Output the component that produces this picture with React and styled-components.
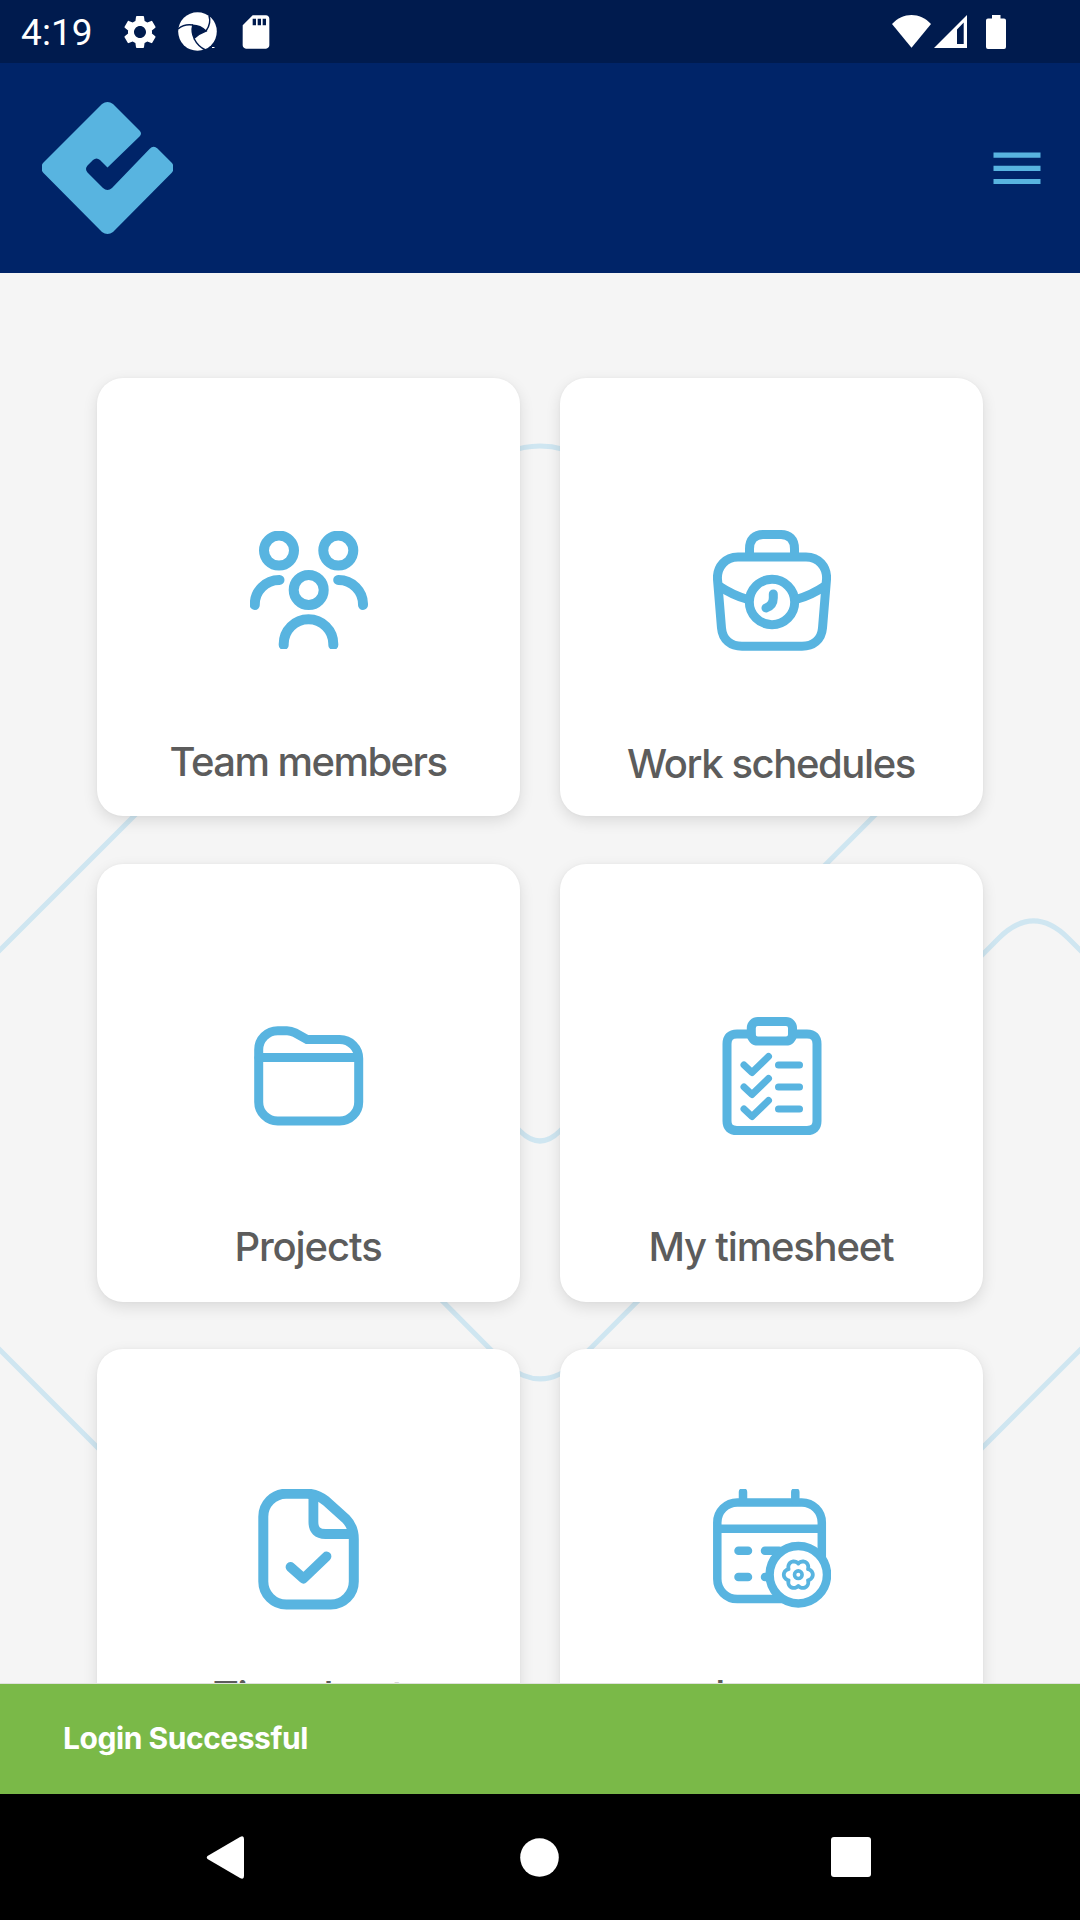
import React from 'react';
import styled, { createGlobalStyle } from 'styled-components';
import { MdSettings, MdSdCard } from 'react-icons/md';

const BLUE = '#58b4e0';
const NAVY = '#002468';
const STATUS = '#001b4e';

const GlobalStyle = createGlobalStyle`
  * { box-sizing: border-box; }
  body { margin: 0; background: #000; }
`;

const Screen = styled.div`
  width: 1080px;
  height: 1920px;
  display: flex;
  flex-direction: column;
  overflow: hidden;
  font-family: Inter, "Liberation Sans", sans-serif;
`;

const StatusBar = styled.div`
  height: 63px;
  flex: none;
  display: flex;
  align-items: center;
  justify-content: space-between;
  padding: 0 74px 0 21px;
  background: ${STATUS};
  color: #fff;
`;

const StatusGroup = styled.div`
  display: flex;
  align-items: center;
  svg { display: block; flex: none; }
`;

const Clock = styled.span`
  width: 99px;
  font: 400 37px/44px Roboto, sans-serif;
  letter-spacing: 0.1px;
  padding-top: 2px;
`;

const Spacer = styled.span`
  width: ${(p) => p.$w}px;
`;

const Header = styled.header`
  height: 210px;
  flex: none;
  display: flex;
  align-items: center;
  justify-content: space-between;
  padding: 0 39px 0 42px;
  background: ${NAVY};
  svg { display: block; }
`;

const MenuButton = styled.button`
  border: 0;
  padding: 0;
  background: none;
  color: ${BLUE};
`;

const Content = styled.main`
  flex: 1;
  min-height: 0;
  position: relative;
  overflow: hidden;
  background: #f5f5f5;
`;

const Backdrop = styled.svg`
  position: absolute;
  top: 0;
  left: 0;
`;

const CardGrid = styled.div`
  position: relative;
  display: grid;
  grid-template-columns: 423px 423px;
  grid-auto-rows: 438px;
  column-gap: 40px;
  row-gap: 47.6px;
  padding: 105px 97px 0;
`;

const Card = styled.div`
  display: flex;
  flex-direction: column;
  align-items: center;
  gap: ${(p) => p.$gap}px;
  padding-top: ${(p) => p.$top}px;
  border-radius: 26px;
  background: #fff;
  box-shadow: 0 5px 15px rgba(0, 0, 0, 0.11), 0 0 3px rgba(0, 0, 0, 0.04);
`;

const Glyph = styled.svg`
  flex: none;
  display: block;
  fill: none;
  stroke: ${BLUE};
  stroke-width: 9;
  stroke-linecap: round;
  stroke-linejoin: ${(p) => p.$join || 'round'};
`;

const Label = styled.span`
  padding-right: 1px;
  font-size: 40px;
  line-height: 50px;
  font-weight: 500;
  letter-spacing: ${(p) => p.$track}px;
  color: #5c5c5c;
  white-space: nowrap;
`;

const Toast = styled.div`
  height: 110px;
  flex: none;
  position: relative;
  display: flex;
  align-items: center;
  padding: 0 63px 2px;
  background: #7ab948;
  box-shadow: 0 -1px 0 #dfe2dc;
  color: #fff;
  font-size: 30px;
  font-weight: 700;
  letter-spacing: -0.45px;
`;

const NavBar = styled.nav`
  height: 126px;
  flex: none;
  display: flex;
  align-items: center;
  background: #000;
  padding: 0 209px 0 206px;
  justify-content: space-between;
  svg { display: block; }
`;

const HomeKey = styled.svg`
  margin-left: 3px;
`;

const Logo = () => (
  <svg width="131" height="132" viewBox="0 0 131 132" fill={BLUE}>
    <path d="M60 2Q65.5-2 71 2L97.5 28.500Q100.500 31.500 97.500 34.500L65.500 65.500L58 58Q54.500 55 51 58L45.500 63.500Q42.500 67 45.500 70.500L61 86Q65.500 90 70 86L107.500 47Q111.500 43 115.500 46.500L129.500 60.500Q134 65.500 129.500 71L71 130Q65.500 134 60 130L1.500 71Q-3 65.500 1.500 60.500Z" />
  </svg>
);

const Shutter = () => (
  <svg width="39" height="39" viewBox="0 0 39 39">
    <circle cx="19.500" cy="19.500" r="19.300" fill="#fff" />
    <g fill={STATUS} stroke={STATUS} strokeWidth="1.500">
      <path d="M14.800 13.200Q22.500 13.400 28 19Q22 21 16.200 26.300Q13 20 14.800 13.200Z" />
      <g fill="none">
        <path d="M15 13Q6 11.500 0 17" />
        <path d="M28 19Q33.500 11.500 31 3.500" />
        <path d="M16 26.500Q20 34.500 27.500 38" />
      </g>
    </g>
    <path d="M32 34.500L39 31V39H30Z" fill={STATUS} />
    <path d="M34 35.500H36.500" stroke="#fff" />
  </svg>
);

const Wifi = () => (
  <svg width="39" height="33" viewBox="0 0 39 33" fill="#fff">
    <path d="M19.500 32.700L0 9C11-3 28-3 39 9Z" />
  </svg>
);

const Signal = () => (
  <svg width="33" height="33" viewBox="0 0 33 33" fill="#fff" fillRule="evenodd">
    <path d="M0 33L33 0V33ZM23 14.500V29H29.700V7.500Z" />
  </svg>
);

const Battery = () => (
  <svg width="20" height="34" viewBox="0 0 20 34" fill="#fff">
    <path d="M6 0H14.500V3.500H18Q20 3.500 20 5.500V32Q20 34 18 34H2Q0 34 0 32V5.500Q0 3.500 2 3.500H6Z" />
  </svg>
);

const TeamGlyph = () => (
  <Glyph width="118" height="118" viewBox="0 0 118 118">
    <g strokeWidth="10">
      <circle cx="29" cy="19.600" r="15" />
      <circle cx="88.300" cy="19.600" r="15" />
      <circle cx="58.700" cy="59" r="15" />
      <path d="M4.800 74A24.500 24.500 0 0 1 29.500 49" />
      <path d="M88.200 49A24.500 24.500 0 0 1 113 74" />
      <path d="M33.700 114V113A24.800 24.800 0 0 1 83.300 113V114" />
    </g>
  </Glyph>
);

const BriefcaseGlyph = () => (
  <Glyph width="118" height="121" viewBox="0 0 118 121">
    <path d="M36.500 24V19C36.500 9 42 4.500 50 4.500H68C76 4.500 81.500 9 81.500 19V24" />
    <path d="M25 27H93C106 27 113.600 37 113.600 48L109.500 98C108.500 110 100 116.300 89 116.300H29C18 116.300 9.500 110 8.500 98L4.400 48C4.400 37 12 27 25 27Z" />
    <circle cx="59" cy="72" r="22.700" />
    <path d="M6 56Q20 65.500 35 69.500M112 56Q98 65.500 83 69.500" />
    <path d="M60.300 64V68Q60.300 75.500 53 78" />
  </Glyph>
);

const FolderGlyph = () => (
  <Glyph width="118" height="118" viewBox="0 0 118 118" $join="miter">
    <path d="M8.700 32.700A19 19 0 0 1 27.700 13.700H37Q41 13.700 45 15.800L57 22.500H89.700A19 19 0 0 1 108.700 41.500V85A19 19 0 0 1 89.700 104H27.700A19 19 0 0 1 8.700 85Z" />
    <path d="M9 40.600H108" />
  </Glyph>
);

const ClipboardGlyph = () => (
  <Glyph width="118" height="118" viewBox="0 0 118 118">
    <path d="M38 17H24Q14 17 14 27V104Q14 113.500 24 113.500H94Q104 113.500 104 104V27Q104 17 94 17H80" />
    <rect x="38.300" y="4.500" width="41.200" height="19.600" rx="6.500" />
    {[0, 22, 44].map((y) => (
      <g key={y} transform={`translate(0 ${y})`} strokeWidth="7">
        <path d="M31 48L39 55.500L55.500 39.500" />
        <path d="M65.500 48H86.500" />
      </g>
    ))}
  </Glyph>
);

const FileCheckGlyph = () => (
  <Glyph width="118" height="121" viewBox="0 0 118 121">
    <path d="M36 4.700H57Q67 4.700 76 12L96 30Q103.800 38 103.800 50V92.500A23 23 0 0 1 80.800 115.500H36.300A23 23 0 0 1 13.300 92.500V27.700A23 23 0 0 1 36 4.700Z" strokeWidth="10" />
    <path d="M63.400 7V33Q63.400 45 75.500 45H100" strokeWidth="9.800" />
    <path d="M40.500 78L53.500 89.500L76.500 67.500" strokeWidth="9.800" />
  </Glyph>
);

const gearPath = Array.from({ length: 96 }, (_, i) => {
  const a = (i / 96) * Math.PI * 2;
  const r = 11.200 + 3.300 * Math.pow(Math.abs(Math.cos(3 * a)), 0.900);
  return `${i ? 'L' : 'M'}${(85.300 + r * Math.cos(a)).toFixed(2)} ${(85.700 + r * Math.sin(a)).toFixed(2)}`;
}).join('') + 'Z';

const CalendarGlyph = () => (
  <Glyph width="118" height="119" viewBox="0 0 118 119">
    <g strokeWidth="8.500">
      <rect x="4.300" y="13.500" width="104.500" height="96.500" rx="20" />
      <path d="M5 39.700H108M30 3V12M82.300 3V12" />
      <path d="M25.500 61.700H35M52 61.700H66M25.500 88H35M52 88H66" />
      <circle cx="85.300" cy="85.700" r="28.700" fill="#fff" />
    </g>
    <path d={gearPath} strokeWidth="3.800" />
    <circle cx="85.300" cy="85.700" r="3.800" strokeWidth="3.600" />
  </Glyph>
);

const cards = [
  { label: 'Team members', Icon: TeamGlyph, top: 153, gap: 87.5, track: -1.55 },
  { label: 'Work schedules', Icon: BriefcaseGlyph, top: 152, gap: 87.5, track: -1.4 },
  { label: 'Projects', Icon: FolderGlyph, top: 153, gap: 87.5, track: -1.1 },
  { label: 'My timesheet', Icon: ClipboardGlyph, top: 153, gap: 87.5, track: -1.2 },
  { label: 'Timesheet', Icon: FileCheckGlyph, top: 140, gap: 61.3, track: -1.2 },
  { label: 'absence', Icon: CalendarGlyph, top: 140, gap: 62.2, track: -1.2 },
];

export default function App() {
  return (
    <Screen>
      <GlobalStyle />
      <StatusBar>
        <StatusGroup>
          <Clock>4:19</Clock>
          <MdSettings size={40} />
          <Spacer $w={18} />
          <Shutter />
          <Spacer $w={18.500} />
          <MdSdCard size={40} />
        </StatusGroup>
        <StatusGroup>
          <Wifi />
          <Spacer $w={3} />
          <Signal />
          <Spacer $w={19} />
          <Battery />
        </StatusGroup>
      </StatusBar>
      <Header>
        <Logo />
        <MenuButton aria-label="Menu">
          <svg width="48" height="32" viewBox="0 0 48 32" fill="currentColor">
            <path d="M.5 .5H47.500V5.800H.5ZM.5 13.800H47.500V19H.5ZM.5 27H47.500V32H.5Z" />
          </svg>
        </MenuButton>
      </Header>
      <Content>
        <Backdrop width="1080" height="1411" viewBox="0 273 1080 1411" fill="none" stroke="#cfe6f1" strokeWidth="5">
          <path d="M-10 960L450 500Q492 446 540 446Q588 446 630 500L890 760Q910 780 890 800L560 1131Q540 1151 520 1131L480 1091Q440 1051 400 1091L360 1131Q320 1171 360 1218L500 1359Q540 1399 580 1359L998.500 938.500Q1033.500 903.500 1068.500 938.500L1090 960" />
          <path d="M-10 1340L500 1850M1090 1340L580 1850" />
        </Backdrop>
        <CardGrid>
          {cards.map(({ label, Icon, top, gap, track }) => (
            <Card key={label} $top={top} $gap={gap}>
              <Icon />
              <Label $track={track}>{label}</Label>
            </Card>
          ))}
        </CardGrid>
      </Content>
      <Toast>Login Successful</Toast>
      <NavBar>
        <svg width="39" height="43" viewBox="0 0 39 43" fill="#fff">
          <path d="M1.500 20L34 1Q38 -1 38 3V40Q38 44 34 42L1.500 23Q0 21.500 1.500 20Z" />
        </svg>
        <HomeKey width="39" height="39" viewBox="0 0 39 39" fill="#fff">
          <circle cx="19.500" cy="19.500" r="19.300" />
        </HomeKey>
        <svg width="40" height="40" viewBox="0 0 40 40" fill="#fff">
          <rect width="40" height="40" rx="3" />
        </svg>
      </NavBar>
    </Screen>
  );
}
